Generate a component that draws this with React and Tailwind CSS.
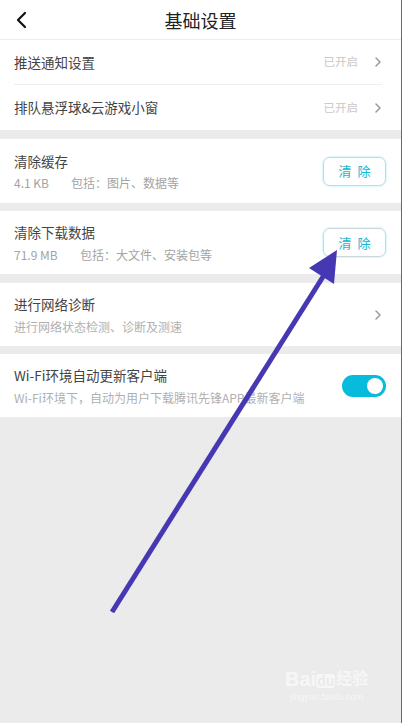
import React from "react";

const Chevron = () => (
  <svg width="8" height="12" viewBox="0 0 8 12" className="shrink-0">
    <path d="M2 2 L6 6 L2 10" fill="none" stroke="#9a9a9a" strokeWidth="1.5" strokeLinecap="round" strokeLinejoin="round" />
  </svg>
);

const ClearBtn = () => (
  <div className="w-[63px] h-[29px] rounded-[7px] border border-[#cfd6d8] shadow-[0_0_2px_#7fe6f5] flex items-center justify-center text-[13px] text-[#15b4d3] tracking-[6px] pl-[6px] shrink-0">
    清除
  </div>
);

export default function App() {
  return (
    <div
      className="relative w-[402px] h-[723px] bg-[#ebebeb] overflow-hidden border-r border-[#6a6a6a]"
      style={{ fontFamily: '"Noto Sans CJK SC", "Noto Sans", sans-serif' }}
    >
      {/* Header */}
      <div className="h-[40px] bg-white border-b border-[#ececec] flex items-center relative">
        <svg width="14" height="18" viewBox="0 0 14 18" className="ml-[15px]">
          <path d="M10 2 L3 9 L10 16" fill="none" stroke="#111" strokeWidth="2.2" strokeLinecap="round" strokeLinejoin="round" />
        </svg>
        <div className="absolute left-0 right-0 text-center text-[18px] text-[#222] leading-[24px] pointer-events-none">
          基础设置
        </div>
      </div>

      {/* Section 1 */}
      <div className="bg-white">
        <div className="h-[44px] flex items-center pl-[14px] pr-[19px]">
          <div className="text-[13.5px] text-[#444] flex-1">推送通知设置</div>
          <div className="text-[11.5px] text-[#c9c9c9] mr-[16px]">已开启</div>
          <Chevron />
        </div>
        <div className="h-px bg-[#eeeeee] ml-[14px] mr-[19px]" />
        <div className="h-[45px] flex items-center pl-[14px] pr-[19px]">
          <div className="text-[13.5px] text-[#444] flex-1">排队悬浮球&amp;云游戏小窗</div>
          <div className="text-[11.5px] text-[#c9c9c9] mr-[16px]">已开启</div>
          <Chevron />
        </div>
      </div>

      {/* Clear cache */}
      <div className="mt-[9px] h-[64px] bg-white flex items-center pl-[14px] pr-[15px]">
        <div className="flex-1">
          <div className="text-[13.5px] text-[#444] leading-[20px]">清除缓存</div>
          <div className="mt-[4px] text-[12px] text-[#a3a3a3] leading-[16px] flex">
            <span className="w-[57px]">4.1 KB</span>
            <span>包括：图片、数据等</span>
          </div>
        </div>
        <ClearBtn />
      </div>

      {/* Clear downloads */}
      <div className="mt-[8px] h-[63px] bg-white flex items-center pl-[14px] pr-[15px]">
        <div className="flex-1">
          <div className="text-[13.5px] text-[#444] leading-[20px]">清除下载数据</div>
          <div className="mt-[5px] text-[12px] text-[#a3a3a3] leading-[16px] flex">
            <span className="w-[66px]">71.9 MB</span>
            <span>包括：大文件、安装包等</span>
          </div>
        </div>
        <ClearBtn />
      </div>

      {/* Network diagnosis */}
      <div className="mt-[9px] h-[63px] bg-white flex items-center pl-[14px] pr-[19px]">
        <div className="flex-1">
          <div className="text-[13.5px] text-[#444] leading-[20px]">进行网络诊断</div>
          <div className="mt-[5px] text-[12px] text-[#b0b0b0] leading-[16px]">进行网络状态检测、诊断及测速</div>
        </div>
        <Chevron />
      </div>

      {/* Wi-Fi auto update */}
      <div className="mt-[8px] h-[63px] bg-white flex items-center pl-[14px] pr-[15px]">
        <div className="flex-1">
          <div className="text-[13.5px] text-[#444] leading-[20px]">Wi-Fi环境自动更新客户端</div>
          <div className="mt-[5px] text-[12px] text-[#b0b0b0] leading-[16px] whitespace-nowrap">Wi-Fi环境下，自动为用户下载腾讯先锋APP最新客户端</div>
        </div>
        <div className="w-[44px] h-[22px] rounded-full bg-[#06bbdc] flex items-center justify-end pr-[3px] shrink-0">
          <div className="w-[16px] h-[16px] rounded-full bg-white" />
        </div>
      </div>

      {/* Annotation arrow */}
      <svg className="absolute left-0 top-0 pointer-events-none" width="402" height="723" viewBox="0 0 402 723">
        <line x1="112" y1="612" x2="326" y2="272" stroke="#4638b3" strokeWidth="5" />
        <polygon points="337,250 309,268 334,284" fill="#4638b3" />
      </svg>

      {/* Watermark */}
      <div className="absolute left-[285px] top-[668px] flex flex-col items-center text-white/60 pointer-events-none">
        <div className="flex items-end text-[20px] font-bold leading-[22px]" style={{ fontFamily: '"Liberation Sans", "Noto Sans CJK SC", sans-serif' }}>
          <span>Bai</span>
          <span className="text-[14px] bg-white/60 text-[#ebebeb] rounded-[3px] px-[1px] leading-[14px] mb-[2px]">du</span>
          <span className="text-[16px] ml-[1px]">经验</span>
        </div>
        <div className="text-[9px] leading-[12px] mt-[1px]" style={{ fontFamily: '"Liberation Sans", sans-serif' }}>jingyan.baidu.com</div>
      </div>
    </div>
  );
}
